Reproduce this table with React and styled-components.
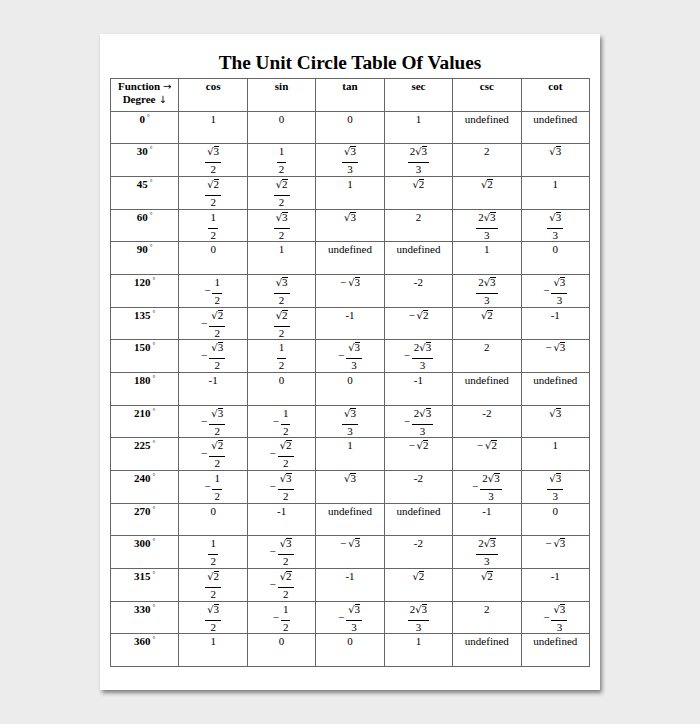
import React from 'react';
import styled, { createGlobalStyle } from 'styled-components';

const GlobalStyle = createGlobalStyle`
  html, body {
    margin: 0;
    padding: 0;
    background: #ececec;
  }
  body {
    font-family: "Liberation Serif", "Times New Roman", serif;
    color: #000;
  }
`;

const FUNCTIONS = ['cos', 'sin', 'tan', 'sec', 'csc', 'cot'];

// '−' (U+2212) marks a typeset minus, '-' is kept as a plain hyphen like the source
const ROWS = [
  ['0', ['1', '0', '0', '1', 'undefined', 'undefined']],
  ['30', ['√3/2', '1/2', '√3/3', '2√3/3', '2', '√3']],
  ['45', ['√2/2', '√2/2', '1', '√2', '√2', '1']],
  ['60', ['1/2', '√3/2', '√3', '2', '2√3/3', '√3/3']],
  ['90', ['0', '1', 'undefined', 'undefined', '1', '0']],
  ['120', ['−1/2', '√3/2', '−√3', '-2', '2√3/3', '−√3/3']],
  ['135', ['−√2/2', '√2/2', '-1', '−√2', '√2', '-1']],
  ['150', ['−√3/2', '1/2', '−√3/3', '−2√3/3', '2', '−√3']],
  ['180', ['-1', '0', '0', '-1', 'undefined', 'undefined']],
  ['210', ['−√3/2', '−1/2', '√3/3', '−2√3/3', '-2', '√3']],
  ['225', ['−√2/2', '−√2/2', '1', '−√2', '−√2', '1']],
  ['240', ['−1/2', '−√3/2', '√3', '-2', '−2√3/3', '√3/3']],
  ['270', ['0', '-1', 'undefined', 'undefined', '-1', '0']],
  ['300', ['1/2', '−√3/2', '−√3', '-2', '2√3/3', '−√3']],
  ['315', ['√2/2', '−√2/2', '-1', '√2', '√2', '-1']],
  ['330', ['√3/2', '−1/2', '−√3/3', '2√3/3', '2', '−√3/3']],
  ['360', ['1', '0', '0', '1', 'undefined', 'undefined']],
];

const Sqrt = ({ children }) => (
  <Root>
    <RadicalSign>√</RadicalSign>
    <Radicand>{children}</Radicand>
  </Root>
);

const renderExpr = s => {
  if (!s.includes('√')) return s;
  const [coef, rad] = s.split('√');
  return (
    <>
      {coef}
      <Sqrt>{rad}</Sqrt>
    </>
  );
};

const Value = ({ value }) => {
  const neg = value.startsWith('−');
  const body = neg ? value.slice(1) : value;

  if (body.includes('/')) {
    const [num, den] = body.split('/');
    return (
      <Group>
        {neg && <FracMinus>−</FracMinus>}
        <Frac>
          <Num>{renderExpr(num)}</Num>
          <Den>{renderExpr(den)}</Den>
        </Frac>
      </Group>
    );
  }

  return (
    <Line>
      {neg && <InlineMinus>−</InlineMinus>}
      {renderExpr(body)}
    </Line>
  );
};

const App = () => {
  return (
    <>
      <GlobalStyle />
      <Backdrop>
        <Page>
          <Title>The Unit Circle Table Of Values</Title>
          <Grid>
            <Cell $bold>
              <Line>Function<Arrow>→</Arrow></Line>
              <Line>Degree<Arrow>↓</Arrow></Line>
            </Cell>
            {FUNCTIONS.map(fn => (
              <Cell key={fn} $bold>
                <Line>{fn}</Line>
              </Cell>
            ))}
            {ROWS.map(([deg, values]) => (
              <React.Fragment key={deg}>
                <Cell $bold>
                  <Line>
                    {deg}
                    <DegreeMark>°</DegreeMark>
                  </Line>
                </Cell>
                {values.map((v, i) => (
                  <Cell key={i}>
                    <Value value={v} />
                  </Cell>
                ))}
              </React.Fragment>
            ))}
          </Grid>
        </Page>
      </Backdrop>
    </>
  );
};

const Backdrop = styled.div`
  min-height: 724px;
  padding: 34px 0 0 100px;
  box-sizing: border-box;
`;

const Page = styled.div`
  width: 500px;
  height: 656px;
  padding: 17px 10px 0;
  box-sizing: border-box;
  background: #fff;
  box-shadow: 2px 3px 4px rgba(0, 0, 0, 0.45);
`;

const Title = styled.h1`
  margin: 0 0 3px;
  font-size: 19.3px;
  line-height: 24px;
  font-weight: 700;
  text-align: center;
`;

const Grid = styled.div`
  display: grid;
  grid-template-columns: repeat(7, 1fr);
  grid-auto-rows: 32.67px;
  border-top: 1px solid #666;
  border-left: 1px solid #666;
`;

const Cell = styled.div`
  display: flex;
  flex-direction: column;
  align-items: center;
  padding-top: 1px;
  border-right: 1px solid #666;
  border-bottom: 1px solid #666;
  font-size: 11px;
  line-height: 13px;
  font-weight: ${props => props.$bold ? 700 : 400};
  overflow: hidden;
`;

const Line = styled.span`
  display: inline-flex;
  align-items: baseline;
  white-space: nowrap;
`;

const Arrow = styled.span`
  margin-left: 3px;
  font-family: "DejaVu Sans", sans-serif;
  font-size: 10px;
  font-weight: 400;
`;

const DegreeMark = styled.span`
  align-self: flex-start;
  margin-left: 2px;
  font-size: 7px;
  line-height: 8px;
  font-weight: 400;
  color: #222;
`;

const Group = styled.span`
  display: inline-flex;
  align-items: flex-start;
`;

const FracMinus = styled.span`
  margin: 8px 2px 0 0;
`;

const InlineMinus = styled.span`
  margin-right: 2px;
`;

const Frac = styled.span`
  display: inline-flex;
  flex-direction: column;
  align-items: center;
`;

const Num = styled.span`
  display: inline-flex;
  align-items: baseline;
  padding: 0 2px 4px;
  border-bottom: 1px solid #000;
`;

const Den = styled.span`
  display: inline-flex;
  align-items: baseline;
  padding: 0 2px;
`;

const Root = styled.span`
  display: inline-flex;
  align-items: baseline;
`;

const RadicalSign = styled.span`
  font-family: "DejaVu Serif", serif;
  font-size: 10px;
`;

const Radicand = styled.span`
  display: inline-block;
  line-height: 9px;
  border-top: 1px solid #000;
`;

export default App;
